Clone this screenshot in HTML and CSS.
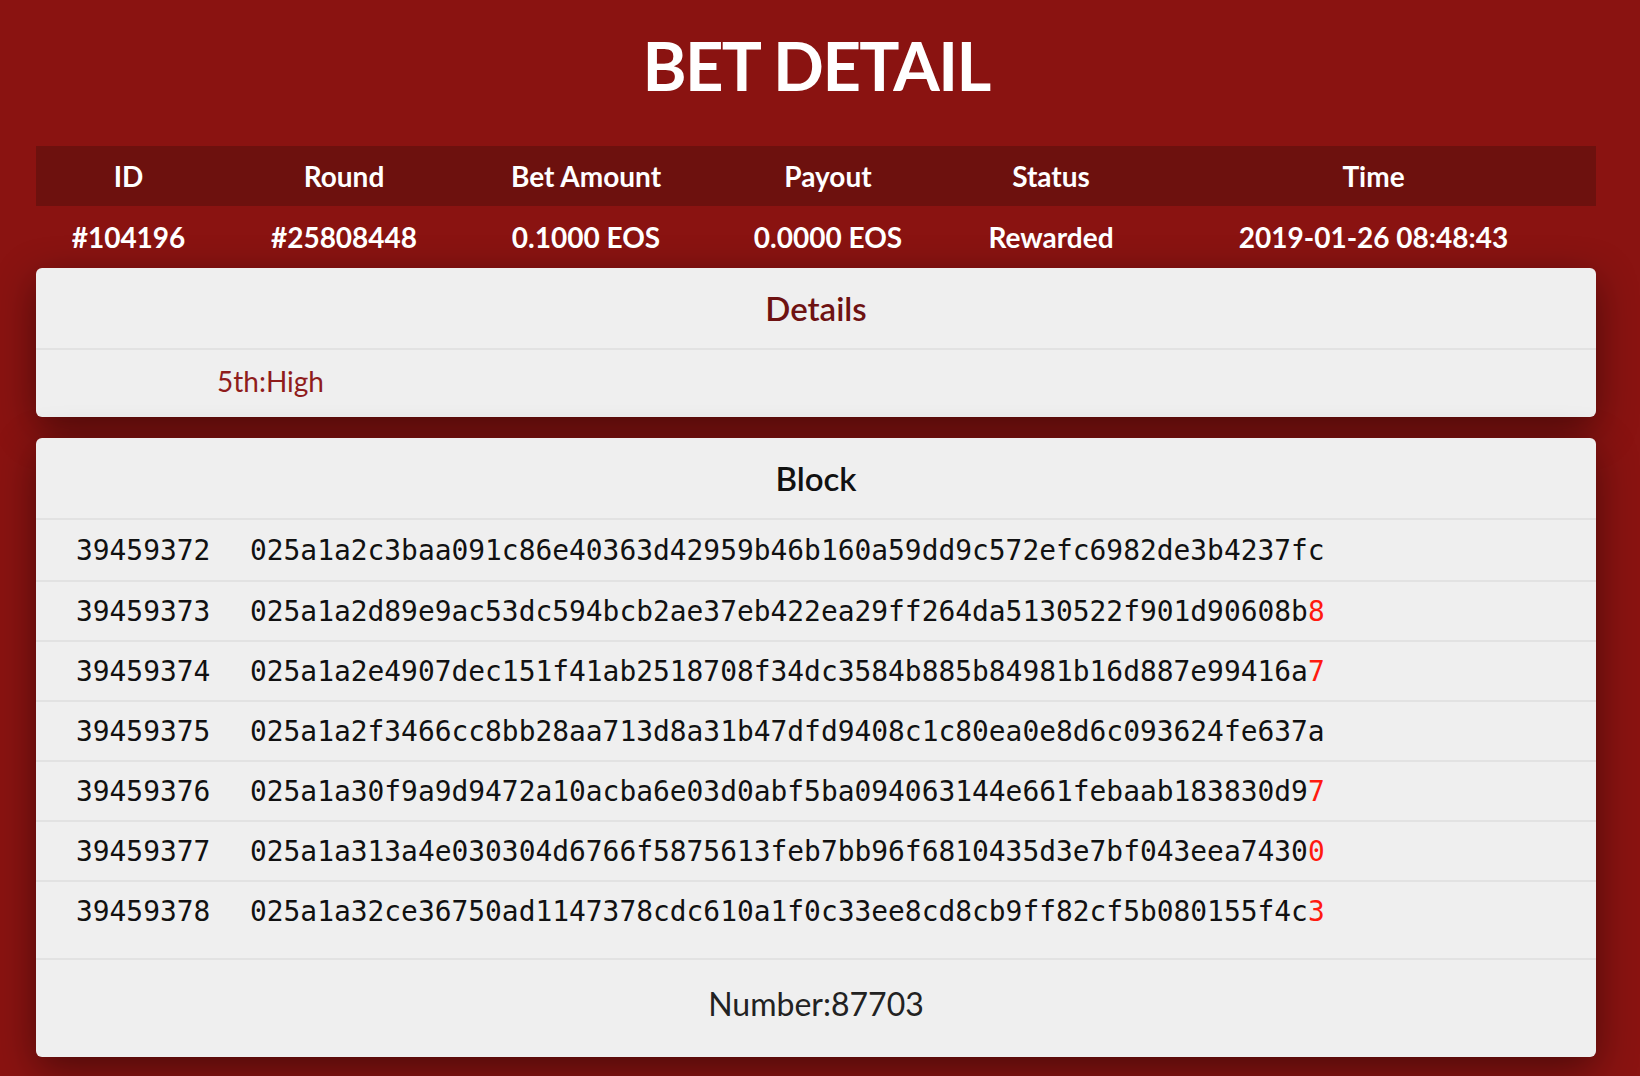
FILE: index.html
```html
<!DOCTYPE html>
<html lang="en">
<head>
  <meta charset="UTF-8">
  <meta name="viewport" content="width=device-width, initial-scale=1.0">
  <title>Bet Detail</title>
  <link rel="stylesheet" href="styles.css">
</head>
<body>
  <div class="page">
    <h1 class="title">BET DETAIL</h1>

    <div class="bet-table">
      <div class="bet-row bet-head">
        <div>ID</div>
        <div>Round</div>
        <div>Bet Amount</div>
        <div>Payout</div>
        <div>Status</div>
        <div>Time</div>
      </div>
      <div class="bet-row bet-values">
        <div>#104196</div>
        <div>#25808448</div>
        <div>0.1000 EOS</div>
        <div>0.0000 EOS</div>
        <div>Rewarded</div>
        <div>2019-01-26 08:48:43</div>
      </div>
    </div>

    <div class="card details">
      <div class="card-head">Details</div>
      <div class="details-body">5th:High</div>
    </div>

    <div class="card block">
      <div class="card-head">Block</div>
      <div class="block-list">
        <div class="block-row"><span>39459372</span><span>025a1a2c3baa091c86e40363d42959b46b160a59dd9c572efc6982de3b4237fc</span></div>
        <div class="block-row"><span>39459373</span><span>025a1a2d89e9ac53dc594bcb2ae37eb422ea29ff264da5130522f901d90608b<em>8</em></span></div>
        <div class="block-row"><span>39459374</span><span>025a1a2e4907dec151f41ab2518708f34dc3584b885b84981b16d887e99416a<em>7</em></span></div>
        <div class="block-row"><span>39459375</span><span>025a1a2f3466cc8bb28aa713d8a31b47dfd9408c1c80ea0e8d6c093624fe637a</span></div>
        <div class="block-row"><span>39459376</span><span>025a1a30f9a9d9472a10acba6e03d0abf5ba094063144e661febaab183830d9<em>7</em></span></div>
        <div class="block-row"><span>39459377</span><span>025a1a313a4e030304d6766f5875613feb7bb96f6810435d3e7bf043eea7430<em>0</em></span></div>
        <div class="block-row"><span>39459378</span><span>025a1a32ce36750ad1147378cdc610a1f0c33ee8cd8cb9ff82cf5b080155f4c<em>3</em></span></div>
      </div>
      <div class="block-foot">Number:87703</div>
    </div>
  </div>
</body>
</html>
```

FILE: styles.css
```css
body {
  font-family: 'Lato', 'Open Sans', Arial, sans-serif;
  margin: 0;
  padding: 0;
  background-color: #8a1311;
  color: #222;
}

.page {
  padding: 25px 44px 19px 36px;
}

.title {
  margin: 0 0 41px;
  font-size: 67px;
  line-height: 80px;
  font-weight: 700;
  letter-spacing: -1.6px;
  color: #fff;
  text-align: center;
}

/* bet summary table */
.bet-row {
  display: grid;
  grid-template-columns: 185px 246px 238px 246px 200px 1fr;
  align-items: center;
  text-align: center;
  color: #fff;
  font-size: 28px;
  font-weight: 700;
}

.bet-head {
  height: 60px;
  background-color: #6d110e;
}

.bet-values {
  height: 62px;
}

/* cards */
.card {
  background-color: #efefef;
  border-radius: 6px;
  box-shadow: 0 12px 40px rgba(0, 0, 0, 0.45);
  overflow: hidden;
}

.card-head {
  height: 80px;
  line-height: 80px;
  text-align: center;
  font-size: 33px;
  font-weight: 600;
  border-bottom: 2px solid #e2e2e2;
}

.details .card-head {
  color: #6e1212;
}

.details-body {
  height: 67px;
  box-sizing: border-box;
  padding: 0 0 5px 181px;
  display: flex;
  align-items: center;
  font-size: 28px;
  color: #8f1c1c;
}

.block {
  margin-top: 21px;
}

.block .card-head {
  color: #111;
}

.block-list {
  padding-bottom: 18px;
}

.block-row {
  display: grid;
  grid-template-columns: 174px 1fr;
  align-items: center;
  height: 60px;
  box-sizing: border-box;
  padding-left: 40px;
  font-family: 'DejaVu Sans Mono', 'Liberation Mono', monospace;
  font-size: 27.9px;
  color: #111;
}

.block-row + .block-row {
  border-top: 2px solid #e2e2e2;
}

.block-row em {
  font-style: normal;
  color: #ff1a0f;
}

.block-foot {
  height: 99px;
  box-sizing: border-box;
  padding-bottom: 10px;
  border-top: 2px solid #e2e2e2;
  display: flex;
  align-items: center;
  justify-content: center;
  font-size: 32px;
  color: #222;
}
```
